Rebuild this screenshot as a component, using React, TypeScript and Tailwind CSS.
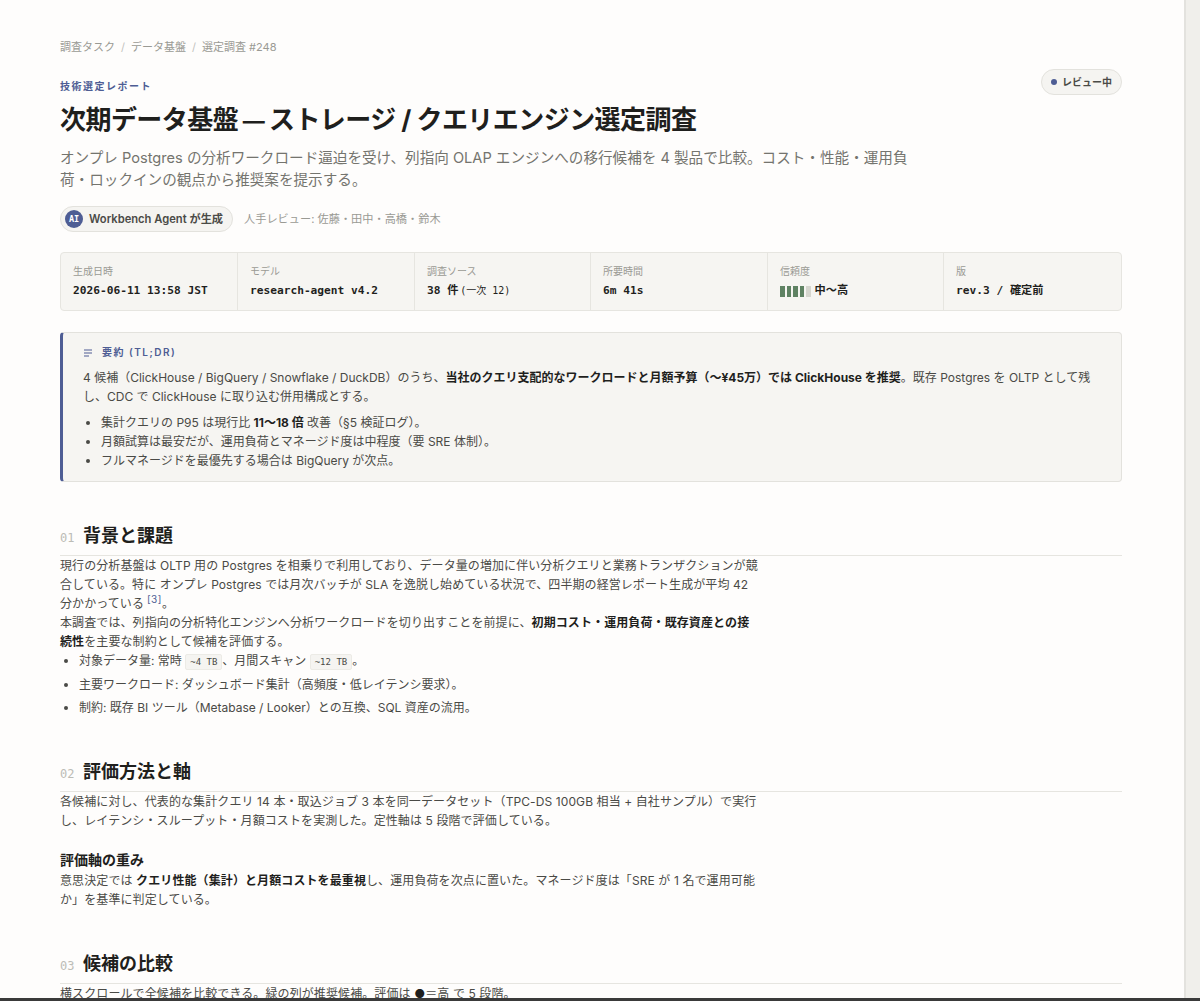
const sans = "font-['Inter','Noto_Sans_CJK_JP',sans-serif]";
const mono = "font-['DejaVu_Sans_Mono','Noto_Sans_CJK_JP',monospace]";

function Meta({ label, children, w }: { label: string; children: React.ReactNode; w: string }) {
  return (
    <div className={`${w} flex h-full flex-col border-r border-[#e6e5e0] pl-3 pt-[11px] last:border-r-0`}>
      <div className="text-[10px] leading-[15px] text-[#9a9a94]">{label}</div>
      <div className="mt-[4px] text-[11.2px] leading-[16px] font-bold text-[#1f1f1d]">{children}</div>
    </div>
  );
}

function Section({ num, title, children }: { num: string; title: string; children: React.ReactNode }) {
  return (
    <section>
      <div className="flex items-baseline border-b border-[#e6e5e0] pb-[6px]">
        <span className={`${mono} w-[23px] text-[12px] leading-[16px] text-[#bcbcb6]`}>{num}</span>
        <h2 className="text-[18px] leading-[27px] font-bold text-[#1f1f1d]">{title}</h2>
      </div>
      {children}
    </section>
  );
}

function Code({ children }: { children: React.ReactNode }) {
  return (
    <code className={`${mono} inline-block rounded-[2px] border border-[#ecebe6] bg-[#f5f4f1] px-[4px] text-[9px] leading-[14px] text-[#4a4a46]`}>
      {children}
    </code>
  );
}

export default function App() {
  return (
    <div className={`${sans} flex h-[1001px] w-[1200px] flex-col overflow-hidden bg-[#fefdfc]`}>
      <div className="flex min-h-0 flex-1">
        <main className="w-[1184px] overflow-hidden pl-[60px] pr-[62px] pt-[39px]">
          <nav className="flex items-center text-[11px] leading-[16px] text-[#9a9a94]">
            <span>調査タスク</span>
            <span className="mx-[6px] text-[#c2c2bc]">/</span>
            <span>データ基盤</span>
            <span className="mx-[6px] text-[#c2c2bc]">/</span>
            <span>選定調査 #248</span>
          </nav>

          <div className="mt-[14px] flex items-start justify-between">
            <div className="pt-[10px] text-[10px] leading-[15px] font-semibold tracking-[1.5px] text-[#4e5d94]">技術選定レポート</div>
            <div className="flex h-[26px] items-center gap-[5px] rounded-full border border-[#e3e2dd] bg-[#f5f4f1] pl-[9px] pr-[9px] text-[10px] font-semibold text-[#4a4a46]">
              <span className="size-[6px] rounded-full bg-[#4e5d94]" />
              レビュー中
            </div>
          </div>

          <h1 className="mt-[7px] text-[26px] leading-[36px] font-bold tracking-[-0.55px] text-[#1f1f1d]">
            次期データ基盤<span className="text-[22px]"> — </span>ストレージ / クエリエンジン選定調査
          </h1>
          <p className="mt-[8px] w-[860px] text-[14.6px] leading-[22px] text-[#74746e]">
            オンプレ Postgres の分析ワークロード逼迫を受け、列指向 OLAP エンジンへの移行候補を 4 製品で比較。コスト・性能・運用負荷・ロックインの観点から推奨案を提示する。
          </p>

          <div className="mt-[15px] flex items-center gap-[11px]">
            <div className="flex h-[26px] items-center gap-[6px] rounded-full border border-[#e3e2dd] bg-[#f5f4f1] pl-[4px] pr-[9px] text-[11.2px] font-semibold text-[#4a4a46]">
              <span className={`${mono} flex size-[18px] items-center justify-center rounded-full bg-[#4e5d94] text-[8.5px] font-bold text-white`}>AI</span>
              Workbench Agent が生成
            </div>
            <span className="text-[11.2px] text-[#9a9a94]">人手レビュー: 佐藤・田中・高橋・鈴木</span>
          </div>

          <div className={`${mono} mt-[20px] flex h-[59px] items-stretch rounded-[4px] border border-[#e6e5e0] bg-[#f6f5f2]`}>
            <Meta w="w-[177px]" label="生成日時">2026-06-11 13:58 JST</Meta>
            <Meta w="w-[177px]" label="モデル">research-agent v4.2</Meta>
            <Meta w="w-[176px]" label="調査ソース">
              38 件 <span className="-ml-[5px] text-[10px] font-normal">(一次 12)</span>
            </Meta>
            <Meta w="w-[177px]" label="所要時間">6m 41s</Meta>
            <Meta w="w-[176px]" label="信頼度">
              <span className="flex items-center gap-[4px]">
                <span className="flex gap-[2px]">
                  <i className="h-[11px] w-[4.5px] bg-[#5f8263]" />
                  <i className="h-[11px] w-[4.5px] bg-[#5f8263]" />
                  <i className="h-[11px] w-[4.5px] bg-[#5f8263]" />
                  <i className="h-[11px] w-[4.5px] bg-[#5f8263]" />
                  <i className="h-[11px] w-[4.5px] bg-[#d6d6cf]" />
                </span>
                中〜高
              </span>
            </Meta>
            <Meta w="flex-1" label="版">rev.3 / 確定前</Meta>
          </div>

          <div className="mt-[21px] rounded-[4px] border border-[#e3e2dd] border-l-[3px] border-l-[#4e5d94] bg-[#f6f5f2] pb-[11px] pl-[20px] pr-[20px] pt-[12px]">
            <div className="flex items-center gap-[9px] text-[10px] leading-[15px] font-semibold tracking-[1.5px] text-[#4e5d94]">
              <svg width="10" height="10" viewBox="0 0 10 10" fill="none" stroke="#4e5d94" strokeWidth="1.1">
                <path d="M1 2h8M1 5h8M1 8h5" />
              </svg>
              要約 (TL;DR)
            </div>
            <p className="mt-[8px] text-[12px] leading-[19px] text-[#4a4a46]">
              4 候補（ClickHouse / BigQuery / Snowflake / DuckDB）のうち、
              <b className="text-[#1f1f1d]">当社のクエリ支配的なワークロードと月額予算（〜¥45万）では ClickHouse を推奨</b>
              。既存 Postgres を OLTP として残し、CDC で ClickHouse に取り込む併用構成とする。
            </p>
            <ul className="mt-[7px] list-disc pl-[18px] text-[12px] leading-[19px] text-[#4a4a46]">
              <li>集計クエリの P95 は現行比 <b className="text-[#1f1f1d]">11〜18 倍</b> 改善（§5 検証ログ）。</li>
              <li>月額試算は最安だが、運用負荷とマネージド度は中程度（要 SRE 体制）。</li>
              <li>フルマネージドを最優先する場合は BigQuery が次点。</li>
            </ul>
          </div>

          <div className="mt-[40px] flex flex-col gap-[41px]">
            <Section num="01" title="背景と課題">
              <div className="w-[699px] text-[12px] leading-[19px] text-[#4a4a46]">
                <p className="w-[700px] tracking-[0.08px]">
                  現行の分析基盤は OLTP 用の Postgres を相乗りで利用しており、データ量の増加に伴い分析クエリと業務トランザクションが競合している。特に オンプレ Postgres では月次バッチが SLA を逸脱し始めている状況で、四半期の経営レポート生成が平均 42 分かかっている
                  <sup className="ml-[3px] text-[10px] tracking-[0.5px] text-[#4e5d94]">[3]</sup>。
                </p>
                <p className="tracking-[0.1px]">
                  本調査では、列指向の分析特化エンジンへ分析ワークロードを切り出すことを前提に、
                  <b className="text-[#1f1f1d]">初期コスト・運用負荷・既存資産との接続性</b>
                  を主要な制約として候補を評価する。
                </p>
                <ul className="list-disc pl-[19px]">
                  <li>対象データ量: 常時 <Code>~4 TB</Code>、月間スキャン <Code>~12 TB</Code>。</li>
                  <li className="mt-[5px]">主要ワークロード: ダッシュボード集計（高頻度・低レイテンシ要求）。</li>
                  <li className="mt-[4px]">制約: 既存 BI ツール（Metabase / Looker）との互換、SQL 資産の流用。</li>
                </ul>
              </div>
            </Section>

            <Section num="02" title="評価方法と軸">
              <div className="w-[699px] text-[12px] leading-[19px] text-[#4a4a46]">
                <p className="tracking-[0.1px]">各候補に対し、代表的な集計クエリ 14 本・取込ジョブ 3 本を同一データセット（TPC-DS 100GB 相当 + 自社サンプル）で実行し、レイテンシ・スループット・月額コストを実測した。定性軸は 5 段階で評価している。</p>
                <h3 className="mt-[19px] text-[14px] leading-[22px] font-bold text-[#1f1f1d]">評価軸の重み</h3>
                <p className="tracking-[0.1px]">
                  意思決定では <b className="text-[#1f1f1d]">クエリ性能（集計）と月額コストを最重視</b>
                  し、運用負荷を次点に置いた。マネージド度は「SRE が 1 名で運用可能か」を基準に判定している。
                </p>
              </div>
            </Section>

            <Section num="03" title="候補の比較">
              <p className="w-[699px] text-[12px] leading-[19px] tracking-[0.1px] text-[#4a4a46]">
                横スクロールで全候補を比較できる。緑の列が推奨候補。評価は <span className="text-[#1f1f1d]">●</span>＝高 で 5 段階。
              </p>
            </Section>
          </div>
        </main>
        <div className="flex-1 border-l-2 border-[#e3e2de] bg-[#f0efeb]" />
      </div>
      <div className="h-[3px] shrink-0 bg-[#3a3a3a]" />
    </div>
  );
}
